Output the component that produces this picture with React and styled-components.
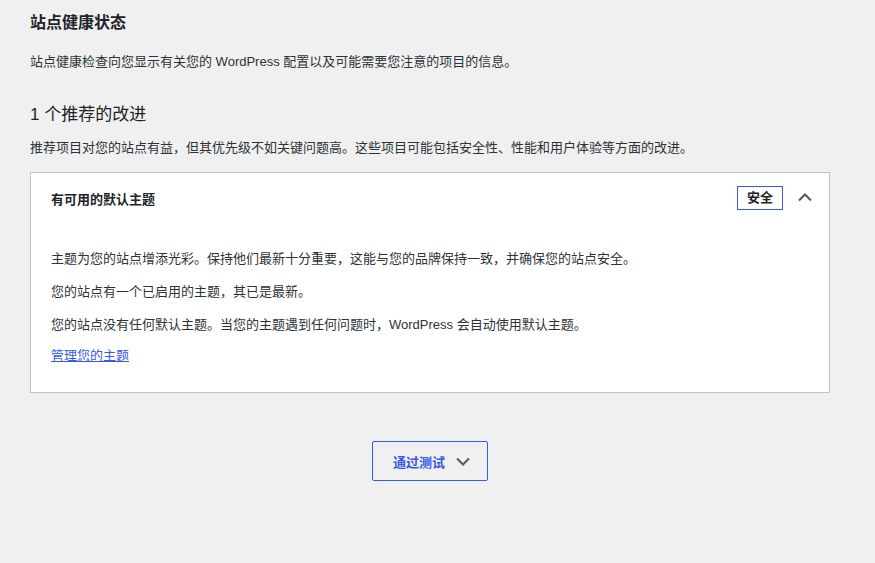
import React from "react";
import styled, { createGlobalStyle } from "styled-components";

const Global = createGlobalStyle`
  html, body { margin: 0; padding: 0; background: #f0f0f1; }
  body {
    font-family: "Liberation Sans", "Noto Sans CJK SC", sans-serif;
    color: #1d2327;
    font-size: 13px;
  }
`;

const Page = styled.div`
  padding: 0 45px 0 30px;
  width: 800px;
`;

const Title = styled.h2`
  margin: 0;
  padding-top: 11px;
  font-size: 16px;
  font-weight: 600;
  line-height: 24px;
`;

const Text = styled.p`
  margin: ${p => p.$m || "0"};
  font-size: 13px;
  line-height: 20px;
  color: #2c3338;
`;

const SubTitle = styled.h3`
  margin: 31px 0 0;
  font-size: 17px;
  font-weight: 400;
  line-height: 24px;
`;

const Card = styled.div`
  margin-top: 14px;
  background: #fff;
  border: 1px solid #c3c4c7;
`;

const CardHead = styled.div`
  display: flex;
  align-items: center;
  height: 50px;
  padding: 0 14px 0 20px;
`;

const CardTitle = styled.div`
  flex: 1;
  font-weight: 600;
  font-size: 13px;
`;

const Badge = styled.span`
  border: 1px solid #3858e9;
  padding: 2px 9px;
  font-size: 13px;
  line-height: 18px;
  font-weight: 600;
  color: #1d2327;
  margin-right: 12px;
`;

const CardBody = styled.div`
  padding: 26px 20px 26px;
  display: flex;
  flex-direction: column;
  gap: 13px;
`;

const LinkLine = styled.div`
  margin-top: -2px;
`;

const Link = styled.a`
  color: #3858e9;
  text-decoration: underline;
  font-size: 13px;
  line-height: 20px;
`;

const ButtonRow = styled.div`
  display: flex;
  justify-content: center;
  margin-top: 48px;
`;

const Button = styled.button`
  display: flex;
  align-items: center;
  gap: 8px;
  height: 40px;
  padding: 0 14px 0 20px;
  background: transparent;
  border: 1px solid #3858e9;
  border-radius: 2px;
  color: #3858e9;
  font-family: inherit;
  font-size: 13px;
  font-weight: 600;
`;

const Chevron = ({ up }) => (
  <svg width="20" height="20" viewBox="0 0 20 20" fill="none"
    stroke="#50575e" strokeWidth="2" style={{ transform: up ? "rotate(180deg)" : "none" }}>
    <path d="M4 7.5l6 6 6-6" />
  </svg>
);

export default function App() {
  return (
    <Page>
      <Global />
      <Title>站点健康状态</Title>
      <Text $m="17px 0 0">站点健康检查向您显示有关您的 WordPress 配置以及可能需要您注意的项目的信息。</Text>
      <SubTitle>1 个推荐的改进</SubTitle>
      <Text $m="11px 0 0">推荐项目对您的站点有益，但其优先级不如关键问题高。这些项目可能包括安全性、性能和用户体验等方面的改进。</Text>
      <Card>
        <CardHead>
          <CardTitle>有可用的默认主题</CardTitle>
          <Badge>安全</Badge>
          <Chevron up />
        </CardHead>
        <CardBody>
          <Text>主题为您的站点增添光彩。保持他们最新十分重要，这能与您的品牌保持一致，并确保您的站点安全。</Text>
          <Text>您的站点有一个已启用的主题，其已是最新。</Text>
          <Text>您的站点没有任何默认主题。当您的主题遇到任何问题时，WordPress 会自动使用默认主题。</Text>
          <LinkLine><Link href="#">管理您的主题</Link></LinkLine>
        </CardBody>
      </Card>
      <ButtonRow>
        <Button>通过测试 <Chevron /></Button>
      </ButtonRow>
    </Page>
  );
}
